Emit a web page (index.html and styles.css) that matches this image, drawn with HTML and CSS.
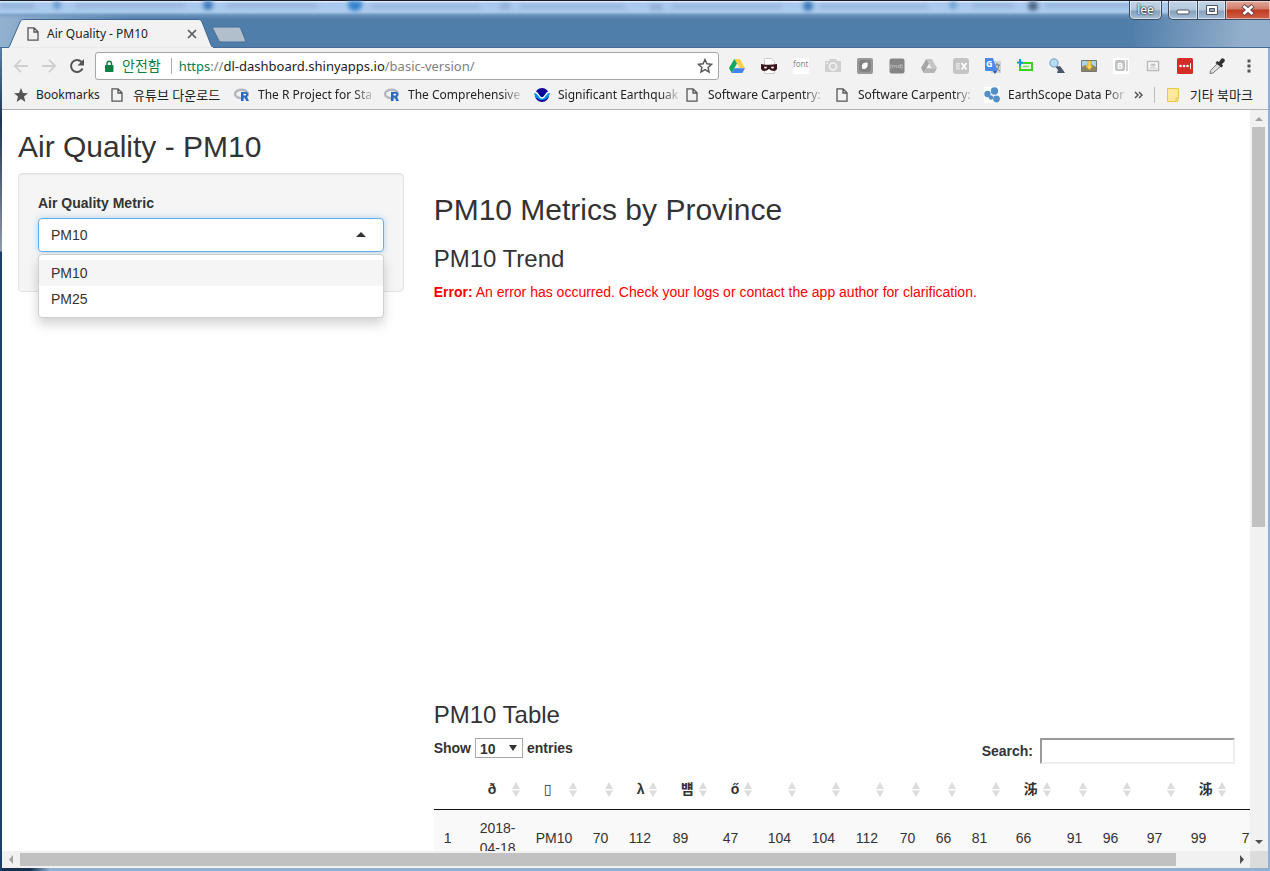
FILE: index.html
```html
<!DOCTYPE html>
<html lang="ko">
<head>
<meta charset="utf-8">
<title>Air Quality - PM10</title>
<link rel="stylesheet" href="styles.css">
</head>
<body>
<svg class="defs" aria-hidden="true">
  <symbol id="doc" viewBox="0 0 12 14"><path d="M1 .8h6l4 4v8.400H1z M7 1v4h4" fill="none" stroke="#555" stroke-width="1.3"/></symbol>
  <symbol id="rlogo" viewBox="0 0 16 14"><ellipse cx="7.5" cy="6" rx="6.5" ry="4.3" fill="none" stroke="#b4b7bd" stroke-width="2.4"/><path d="M7 4h5a2.4 2.4 0 0 1 .8 4.6L15 13h-2.8l-1.6-3.8H9.5V13H7z" fill="#2668c2"/><path d="M9.5 5.8v1.6h2a.8.8 0 0 0 0-1.6z" fill="#fff"/></symbol>
  <symbol id="drive" viewBox="0 0 16 14"><path d="M5.300 0h5.400L16 9h-5.400z" class="d1"/><path d="M5.300 0 8 4.600 2.700 14 0 9z" class="d2"/><path d="M5.300 9.200H16L13.300 14H2.700z" class="d3"/></symbol>
  <symbol id="sort" viewBox="0 0 8 15"><path d="M4 0 8 7H0zM0 8.500h8L4 15z" fill="#dcdcdc"/></symbol>
</svg>
<div class="window">
  <header class="titlebar">
    <svg class="glass" viewBox="0 0 1270 14" preserveAspectRatio="none" aria-hidden="true">
      <g fill="#3e78b8"><circle cx="57" cy="4" r="4" opacity=".6"/><circle cx="208" cy="4" r="5"/><circle cx="355" cy="3" r="7" fill="#3381cc"/><circle cx="808" cy="5" r="5"/><circle cx="953" cy="4" r="4" opacity=".5"/><circle cx="1033" cy="5" r="5" fill="#4c6683"/></g>
      <g fill="#6788ac" opacity=".4"><path d="M0 3h35v4H0zM75 3h110v3H75zM226 3h92v3h-92zM372 4h108v3H372zM500 2h10v6h-10zM520 4h105v3H520zM650 3h12v6h-12zM672 4h110v3H672zM820 4h108v3H820zM972 3h42v3h-42zM1045 3h85v3h-85z"/></g>
    </svg>
    <div class="tabs">
      <div class="tab">
        <svg class="tab-shape" viewBox="0 0 206 29" preserveAspectRatio="none" aria-hidden="true"><path d="M0 29Q1 29 2 26L12 3C13 1 14 .5 16 .5H190C192 .5 193 1 194 3L203 26Q204 28.500 206 29Z" fill="#f2f2f2" stroke="#3e6690"/><path d="M1 28.600H205" stroke="#f2f2f2"/></svg>
        <svg class="ico-doc"><use href="#doc"/></svg>
        <span class="tab-title">Air Quality - PM10</span>
        <button class="bare" aria-label="Close tab"><svg width="10" height="10"><path d="M1 1l8 8M9 1L1 9" stroke="#5a5a5a" stroke-width="1.7"/></svg></button>
      </div>
      <button class="bare newtab" aria-label="New tab"><svg width="34" height="17"><path d="M1.500 1h24c2 0 2.500.5 3.500 2l4 10c.8 2 .3 3-1.500 3H10c-2 0-3-.5-4-3L1 3C.5 1.500.5 1 1.500 1z" fill="#b1bfcd" stroke="#456c95"/></svg></button>
    </div>
    <div class="controls">
      <button class="user">lee</button>
      <div class="winbtns">
        <button aria-label="Minimize"><svg width="14" height="12"><rect x="1" y="6" width="12" height="4" rx="1" fill="#fff" stroke="#51535e"/></svg></button>
        <button aria-label="Maximize"><svg width="14" height="12"><path d="M1.500 1.500h11v9h-11z" fill="#fff" stroke="#51535e"/><path d="M4.500 4.500h5v3h-5z" fill="#8ea9c4" stroke="#51535e"/></svg></button>
        <button class="close" aria-label="Close"><svg width="14" height="12"><path d="M2 1.500 12 10.500M12 1.500 2 10.500" stroke="#62424a" stroke-width="4.600"/><path d="M2.500 2 11.500 10M11.500 2 2.500 10" stroke="#fff" stroke-width="2.800"/></svg></button>
      </div>
    </div>
  </header>

  <div class="toolbar">
    <button class="bare" aria-label="Back"><svg width="16" height="16"><path d="M15 8H2M8 1.800 1.800 8 8 14.200" fill="none" stroke="#cfcfcf" stroke-width="1.800"/></svg></button>
    <button class="bare" aria-label="Forward"><svg width="16" height="16"><path d="M1 8h13M8 1.800 14.200 8 8 14.200" fill="none" stroke="#cfcfcf" stroke-width="1.800"/></svg></button>
    <button class="bare" aria-label="Reload"><svg width="16" height="16"><path d="M13.500 10.500A6 6 0 1 1 12.500 4" fill="none" stroke="#555" stroke-width="2"/><path d="M15 1v6.500H8.500z" fill="#555"/></svg></button>
    <div class="omnibox">
      <svg width="10" height="13"><rect x="1" y="5" width="8.500" height="7" rx=".8" fill="#0b8043"/><path d="M3 5.500V3.500a2.200 2.200 0 0 1 4.500 0v2" fill="none" stroke="#0b8043" stroke-width="1.400"/></svg>
      <span class="secure">안전함</span>
      <span class="url"><span class="scheme">https</span><span class="dim">://</span>dl-dashboard.shinyapps.io<span class="dim">/basic-version/</span></span>
      <button class="bare" aria-label="Bookmark this page"><svg width="16" height="16"><path d="M8 1.500l1.900 4.300 4.700.5-3.500 3.100 1 4.600L8 11.600 3.900 14l1-4.600L1.400 6.300l4.700-.5z" fill="none" stroke="#555" stroke-width="1.400"/></svg></button>
    </div>
    <div class="extensions">
      <svg class="drive-color ext"><use href="#drive" y="1" width="16" height="14"/></svg>
      <svg class="ext"><path d="M3.500.5h7l3 3v12h-10z" fill="#fff" stroke="#ccc"/><path d="M0 6q8 1.500 16 0v5q-1 2-3 2-3 0-5-2-2 2-5 2-2 0-3-2z" fill="#38141b"/><path d="M3 8.800h3.200l-1 1.700H3.500zM9.800 8.800H13l-.5 1.700h-1.700z" fill="#fff"/></svg>
      <svg class="ext"><rect width="16" height="16" fill="#fff"/><text x="0" y="9" font-size="8" fill="#888">font</text></svg>
      <svg class="ext"><path d="M0 3h4l1-2h6l1 2h4v11H0z" fill="#d0d0d0"/><circle cx="8" cy="8.500" r="3.500" fill="none" stroke="#f4f4f4" stroke-width="1.500"/><path d="M1 5h2" stroke="#fff"/></svg>
      <svg class="ext"><rect width="16" height="16" rx="2" fill="#999"/><rect x="2" y="2" width="12" height="12" rx="3" fill="#828282"/><path d="M5.500 11C4 8 5 4 10.500 4.500c1 4-1 7-5 6.500z" fill="#fff"/></svg>
      <svg class="ext"><rect x=".5" y=".5" width="15" height="15" rx="2" fill="#858585"/><text x="1" y="10" font-size="6" fill="#ccc">(md)</text></svg>
      <svg class="drive-gray ext"><use href="#drive" y="1" width="16" height="14"/></svg>
      <svg class="ext"><rect width="16" height="16" rx="3" fill="#c4c4c4"/><path d="M3 5h4v1.500H4.500v1H7V9H4.500v1H7v1.500H3z" fill="#e4e4e4"/><path d="M8.500 5l5 6.500M13.500 5l-5 6.500" stroke="#fff" stroke-width="1.800"/></svg>
      <svg class="ext"><rect x="6" y="3" width="10" height="12" fill="#d3d3d3"/><path d="M9 7h6M12 5v2M10 13q4-2 4-6M10 8q2 4 5 5" fill="none" stroke="#687b8a"/><path d="M0 0h8l4 13H1q-1 0-1-1z" fill="#4a88ee"/><text x="1" y="9" font-size="9" font-weight="700" fill="#fff">G</text><path d="M8 13h4l-2 3z" fill="#2a56b8"/></svg>
      <svg class="ext"><path d="M3 5h12v7H3z" fill="none" stroke="#3bd11d" stroke-width="2"/><path d="M6 8.500h6" stroke="#7ce064" stroke-width="1.500"/><path d="M3 1v7M0 4.500h6" stroke="#0f98da" stroke-width="2"/></svg>
      <svg class="ext"><path d="M7 8l4 4" stroke="#557" stroke-width="2"/><circle cx="5" cy="5" r="4" fill="#b9dcf2" stroke="#8ab4d5" stroke-width="1.500"/><path d="M7 9l4-1 3 4 2 3H8l1-3z" fill="#495568"/></svg>
      <svg class="ext"><path d="M.5 2.500h15v11H.5z" fill="#a6d7ed" stroke="#777"/><path d="M1 9l3-2 3 2 3-3 5 3v4H1z" fill="#8b8362"/><path d="M7 3h3v5h2L8.500 12l-4-4H7z" fill="#ffdb55" stroke="#cb981b" stroke-width=".7"/></svg>
      <svg class="ext"><rect width="16" height="16" fill="#fff"/><rect x="2" y="2" width="10" height="11" rx="2" fill="#c2c2c2"/><path d="M14 2v11" stroke="#c2c2c2" stroke-width="1.500"/><text x="4" y="11" font-size="9" font-weight="700" fill="#fff">B</text></svg>
      <svg class="ext"><path d="M2.500 3.500h11v9h-11z" fill="#fff" stroke="#bababa" stroke-width="1.500"/><path d="M6 6h1.500v1h1V6H10v2H6zM4.500 10h7" fill="none" stroke="#bbb"/></svg>
      <svg class="ext"><rect width="16" height="16" rx="1.500" fill="#d32d27"/><g fill="#fff"><circle cx="3.500" cy="8" r="1.300"/><circle cx="7" cy="8" r="1.300"/><circle cx="10.500" cy="8" r="1.300"/><path d="M13 5h1v6h-1z"/></g></svg>
      <svg class="ext"><path d="M9 5l3 3-8 7-3 .5.500-3z" fill="#e0e0e0" stroke="#777"/><path d="M8 3l2 1 2-3q2-2 4 1 0 2-3 4l1 2-1.500 1.500L6.500 5z" fill="#333"/></svg>
    </div>
    <button class="bare menu" aria-label="Menu"><svg width="4" height="14"><path d="M.5.5h3v3h-3zM.5 5.500h3v3h-3zM.5 10.500h3v3h-3z" fill="#555"/></svg></button>
  </div>

  <nav class="bookmarks">
    <a class="first" href="#"><svg width="14" height="14"><path d="M7 0l2 5 5 .3-4 3.300L11.400 14 7 10.900 2.600 14 4 8.600 0 5.300 5 5z" fill="#555"/></svg><span>Bookmarks</span></a>
    <a class="second hangul" href="#"><svg class="ico-doc"><use href="#doc"/></svg><span>유튜브 다운로드</span></a>
    <a class="fade" href="#"><svg width="16" height="14"><use href="#rlogo"/></svg><span>The R Project for Sta</span></a>
    <a class="fade" href="#"><svg width="16" height="14"><use href="#rlogo"/></svg><span>The Comprehensive</span></a>
    <a class="fade" href="#"><svg width="16" height="16"><circle cx="8" cy="8" r="7" fill="#0a049b"/><path d="M0 5q4 1 8 6 4-5 8-6a8 8 0 1 1-16 0z" fill="#0092e5"/><path d="M0 5q3 0 4.500 3Q6 11 8 11t3.500-3Q13 5 16 5" fill="none" stroke="#fff" stroke-width="1.300"/></svg><span>Significant Earthquak</span></a>
    <a class="fade" href="#"><svg class="ico-doc"><use href="#doc"/></svg><span>Software Carpentry:</span></a>
    <a class="fade" href="#"><svg class="ico-doc"><use href="#doc"/></svg><span>Software Carpentry:</span></a>
    <a class="fade" href="#"><svg width="16" height="16"><rect width="16" height="16" fill="#fff"/><g fill="#5490c8"><circle cx="3.500" cy="7" r="3.200"/><circle cx="10.500" cy="4" r="3.700"/><circle cx="7" cy="10.500" r="2.300"/><circle cx="12.500" cy="12" r="3.400"/></g></svg><span>EarthScope Data Por</span></a>
    <button class="bare more" aria-label="More bookmarks"><svg width="9" height="8"><path d="M1 1l3 3-3 3M5 1l3 3-3 3" fill="none" stroke="#555" stroke-width="1.500"/></svg></button>
    <a class="other hangul" href="#"><svg width="12" height="14"><path d="M.5.500h11v9l-1 4H.5z" fill="#ffe899" stroke="#e9c649"/><path d="M9 13v-3h2.500" fill="none" stroke="#e9c649"/></svg><span>기타 북마크</span></a>
  </nav>

  <div class="viewport">
    <main class="page">
      <h2>Air Quality - PM10</h2>
      <div class="row">
        <aside>
          <form class="well">
            <label for="metric">Air Quality Metric</label>
            <div class="selectize">
              <button type="button" id="metric" class="select-input" aria-haspopup="listbox" aria-expanded="true"><span>PM10</span><i class="caret"></i></button>
              <ul class="dropdown" role="listbox">
                <li class="active" role="option" aria-selected="true">PM10</li>
                <li role="option" aria-selected="false">PM25</li>
              </ul>
            </div>
          </form>
        </aside>
        <section class="main">
          <h2>PM10 Metrics by Province</h2>
          <h3>PM10 Trend</h3>
          <div class="plot"><b>Error:</b> An error has occurred. Check your logs or contact the app author for clarification.</div>
          <h3>PM10 Table</h3>
          <div class="table-tools">
            <label class="length">Show <span class="pick"><select><option>10</option><option>25</option><option>50</option></select></span> entries</label>
            <label class="search">Search: <input type="search"></label>
          </div>
          <table>
            <colgroup><col class="w36"><col class="w56"><col class="w57"><col class="w36"><col class="w44"><col class="w50"><col class="w45"><col class="w44"><col class="w44"><col class="w44"><col class="w36"><col class="w36"><col class="w44"><col class="w51"><col class="w36"><col class="w44"><col class="w44"><col class="w51"><col class="w44"></colgroup>
            <thead><tr>
              <th></th>
              <th>ð<svg class="sort"><use href="#sort"/></svg></th>
              <th><span class="tofu">▯</span><svg class="sort"><use href="#sort"/></svg></th>
              <th><svg class="sort"><use href="#sort"/></svg></th>
              <th>λ<svg class="sort"><use href="#sort"/></svg></th>
              <th>뱸<svg class="sort"><use href="#sort"/></svg></th>
              <th>ő<svg class="sort"><use href="#sort"/></svg></th>
              <th><svg class="sort"><use href="#sort"/></svg></th>
              <th><svg class="sort"><use href="#sort"/></svg></th>
              <th><svg class="sort"><use href="#sort"/></svg></th>
              <th><svg class="sort"><use href="#sort"/></svg></th>
              <th><svg class="sort"><use href="#sort"/></svg></th>
              <th><svg class="sort"><use href="#sort"/></svg></th>
              <th class="tight">泲<svg class="sort"><use href="#sort"/></svg></th>
              <th><svg class="sort"><use href="#sort"/></svg></th>
              <th><svg class="sort"><use href="#sort"/></svg></th>
              <th><svg class="sort"><use href="#sort"/></svg></th>
              <th class="tight">泲<svg class="sort"><use href="#sort"/></svg></th>
              <th></th>
            </tr></thead>
            <tbody><tr><td>1</td><td>2018-04-18</td><td>PM10</td><td>70</td><td>112</td><td>89</td><td>47</td><td>104</td><td>104</td><td>112</td><td>70</td><td>66</td><td>81</td><td>66</td><td>91</td><td>96</td><td>97</td><td>99</td><td>7</td></tr></tbody>
          </table>
        </section>
      </div>
    </main>
    <div class="vscroll">
      <svg width="17" height="17"><path d="M5 11h8L9 7z" fill="#a3a3a3"/></svg>
      <div class="thumb"></div>
      <svg width="17" height="17"><path d="M5 6h8L9 10z" fill="#505050"/></svg>
    </div>
    <div class="hscroll">
      <svg width="18" height="17"><path d="M11 4v9L7 8.500z" fill="#a3a3a3"/></svg>
      <div class="thumb"></div>
      <svg width="17" height="17"><path d="M7 4v9l4-4.500z" fill="#505050"/></svg>
    </div>
    <div class="corner"></div>
  </div>
</div>
</body>
</html>
```
FILE: styles.css
```css
* { box-sizing: border-box; }
body {
  margin: 0;
  color: #333;
  font: 14px/20px "Liberation Sans", Arial, "Noto Sans CJK KR", sans-serif;
}
.defs { position: absolute; width: 0; height: 0; }
button, input, select { font: inherit; color: inherit; }
.bare { display: flex; flex: none; padding: 0; border: 0; background: none; }
svg { flex: none; display: block; }
.window {
  display: flex;
  flex-direction: column;
  height: 100vh;
  padding: 0 2px 3px;
  background:
    linear-gradient(#5b7ea3 48px, #1d3550 120px, #8f9aa8 251px, #1d3f66 252px) 0 0 / 2px 100% no-repeat,
    linear-gradient(to right, #16304e 30px, #8eb1d3 50px);
  overflow: hidden;
}

/* Title bar */
.titlebar {
  position: relative;
  display: flex;
  justify-content: space-between;
  flex: none;
  height: 48px;
  margin: 0 -2px;
  padding: 0 0 0 8px;
  border-top: 1px solid #1c1c28;
  border-bottom: 1px solid #456b95;
  background: linear-gradient(#dcebfa 0 1px, #a9caee 2px, #abcbed 11px, rgba(119, 157, 196, 0.7) 14px, transparent 18px),
    linear-gradient(100deg, #96b4d2 0, #507eab 130px, #507eab 1120px, #93afcb 1230px);
}
.glass { position: absolute; left: 0; top: 0; width: 100%; height: 14px; filter: blur(2px); }
.tabs { position: relative; display: flex; align-items: flex-end; }
.tab {
  position: relative;
  display: flex;
  align-items: center;
  width: 206px;
  height: 29px;
  margin-bottom: -1px;
  padding: 0 17px 0 19px;
}
.tab-shape { position: absolute; left: 0; top: 0; width: 100%; height: 100%; }
.tab > :not(.tab-shape) { position: relative; }
.tab-title { flex: 1; margin-left: 8px; }
.ico-doc { width: 12px; height: 14px; }
.newtab { margin: 0 0 4px -2px; }
.tab-title, .omnibox, .bookmarks, .user {
  color: #222;
  font: 12px/16px "Noto Sans", "Noto Sans CJK KR", sans-serif;
}
.controls { position: relative; display: flex; align-items: flex-start; gap: 6px; }
.controls button {
  display: flex;
  align-items: center;
  justify-content: center;
  height: 19px;
  padding: 0;
  border: 1px solid #3c4c62;
  border-top: 0;
  background: linear-gradient(#c4d5e8, #b3c7dc 9px, #86a2be 10px, #a7bdd4);
  box-shadow: inset 0 0 0 1px rgba(255, 255, 255, 0.5);
}
.controls .user {
  width: 33px;
  border-radius: 0 0 5px 5px;
  color: #fff;
  text-shadow: 0 0 2px #222, 0 0 2px #222;
}
.winbtns { display: flex; }
.winbtns button { width: 28px; border-right: 0; }
.winbtns button:first-child { width: 29px; border-radius: 0 0 0 5px; }
.controls .close { width: 45px; background: linear-gradient(#e2a99b, #d07e6a 8px, #bf3b20 9px, #d0604a); }

/* Toolbar */
.toolbar {
  display: flex;
  align-items: center;
  gap: 12px;
  flex: none;
  height: 36px;
  padding: 0 17px 0 11px;
  background: #f2f2f2;
}
.omnibox {
  display: flex;
  align-items: center;
  flex: 1;
  height: 28px;
  margin-left: -2px;
  padding: 0 5px 0 8px;
  border: 1px solid #a6a6a6;
  border-radius: 3px;
  background: #fff;
  font-size: 13px;
}
.secure { margin-left: 8px; padding-right: 10px; border-right: 1px solid #aaa; color: #0b8043; font-size: 14px; }
.url { flex: 1; margin-left: 7px; }
.scheme { color: #0b8043; }
.dim { color: #808080; }
.extensions { display: flex; gap: 16px; margin-right: 10px; margin-left: -2px; }
.ext { width: 16px; height: 16px; font-family: "Noto Sans", sans-serif; }
.drive-color { --a: #ffcf48; --b: #11a861; --c: #4283ed; }
.drive-gray { --a: #c4c4c4; --b: #a5a5a5; --c: #b5b5b5; }
.d1 { fill: var(--a); }
.d2 { fill: var(--b); }
.d3 { fill: var(--c); }

/* Bookmarks */
.bookmarks {
  display: flex;
  align-items: center;
  flex: none;
  height: 26px;
  padding: 0 15px 3px 12px;
  border-bottom: 1px solid #b3b3b3;
  background: #f2f2f2;
}
.bookmarks a {
  display: flex;
  align-items: center;
  gap: 8px;
  color: #222;
  text-decoration: none;
  white-space: nowrap;
}
.bookmarks .first { width: 97px; }
.bookmarks .second { width: 123px; gap: 10px; }
.bookmarks .hangul { font-size: 13px; }
.bookmarks .fade { width: 150px; }
.fade .ico-doc { margin: 0 2px; }
.fade span {
  -webkit-mask-image: linear-gradient(to right, #000 calc(100% - 18px), rgba(0, 0, 0, 0.2));
  mask-image: linear-gradient(to right, #000 calc(100% - 18px), rgba(0, 0, 0, 0.2));
}
.bookmarks .other { margin-left: auto; padding-left: 12px; border-left: 1px solid #bbb; gap: 11px; }

/* Page area */
.viewport {
  display: grid;
  grid-template: minmax(0, 1fr) 17px / minmax(0, 1fr) 18px;
  flex: 1;
  min-height: 0;
  background: #f1f1f1;
}
.page { overflow: hidden; padding: 20px 0 0 16px; background: #fff; }
h2, h3 { margin: 20px 0 10px; font-weight: 400; }
h2 { font-size: 30px; line-height: 33px; }
h3 { font-size: 24px; line-height: 26px; }
.page > h2 { margin-top: 0; }
.row { display: grid; grid-template-columns: minmax(0, 1fr) minmax(0, 2fr); margin-left: -15px; }
.row aside, .main { padding: 0 15px; }
.well {
  min-height: 119px;
  padding: 19px;
  border: 1px solid #e3e3e3;
  border-radius: 4px;
  background: #f5f5f5;
  box-shadow: inset 0 1px 1px rgba(0, 0, 0, 0.05);
}
label { font-weight: 700; }
.well label { display: block; margin-bottom: 5px; }
.selectize { position: relative; }
.select-input {
  display: flex;
  align-items: center;
  justify-content: space-between;
  width: 100%;
  height: 34px;
  padding: 0 17px 2px 12px;
  border: 1px solid #66afe9;
  border-radius: 4px;
  background: #fff;
  box-shadow: 0 0 6px rgba(102, 175, 233, 0.5);
}
.select-input span { padding-top: 2px; }
.caret { border: 5px solid transparent; border-top: 0; border-bottom: 5px solid #333; }
.dropdown {
  position: absolute;
  top: 36px;
  left: 0;
  right: 0;
  margin: 0;
  padding: 5px 0;
  border: 1px solid #d0d0d0;
  border-radius: 4px;
  background: #fff;
  box-shadow: 0 6px 12px rgba(0, 0, 0, 0.18);
  list-style: none;
}
.dropdown li { padding: 3px 12px; }
.dropdown .active { background: #f5f5f5; }
.plot { height: 400px; color: #f00; }

/* Data table */
.table-tools { display: flex; justify-content: space-between; align-items: flex-start; }
.length { display: flex; gap: 4px; }
.pick { position: relative; }
.pick::after {
  position: absolute;
  top: 7px;
  right: 6px;
  border: 4px solid transparent;
  border-top: 6px solid #333;
  border-bottom: 0;
  content: "";
  pointer-events: none;
}
.length select {
  display: block;
  width: 48px;
  height: 20px;
  padding: 0 0 0 4px;
  border: 1px solid #a9a9a9;
  border-radius: 0;
  background: #fff;
  appearance: none;
}
.search { display: flex; align-items: center; gap: 7px; }
.search input { width: 195px; height: 26px; border: 2px inset #eee; background: #fff; }
table { width: 842px; margin-top: 5px; border-spacing: 0; table-layout: fixed; }
th { position: relative; height: 40px; padding: 10px 0 10px 18px; text-align: left; border-bottom: 1px solid #111; white-space: nowrap; }
.tofu { font-family: "DejaVu Sans", sans-serif; font-weight: 400; }
.sort { position: absolute; right: 6px; top: 13px; width: 8px; height: 15px; }
td { padding: 8px 10px; background: #f9f9f9; }
.w36 { width: 36px; }
.w44 { width: 44px; }
.w45 { width: 45px; }
.w50 { width: 50px; }
.w51 { width: 51px; }
.w56 { width: 56px; }
.w57 { width: 57px; }

/* Scrollbars */
.vscroll { display: flex; flex-direction: column; justify-content: space-between; }
.vscroll .thumb { flex: 0 0 54%; width: 13px; margin: 0 0 auto 2px; background: #c1c1c1; }
.hscroll { display: flex; align-items: center; }
.hscroll .thumb { width: 92.6%; height: 13px; margin-right: auto; background: #c1c1c1; }
.corner { background: #dcdcdc; }
```
